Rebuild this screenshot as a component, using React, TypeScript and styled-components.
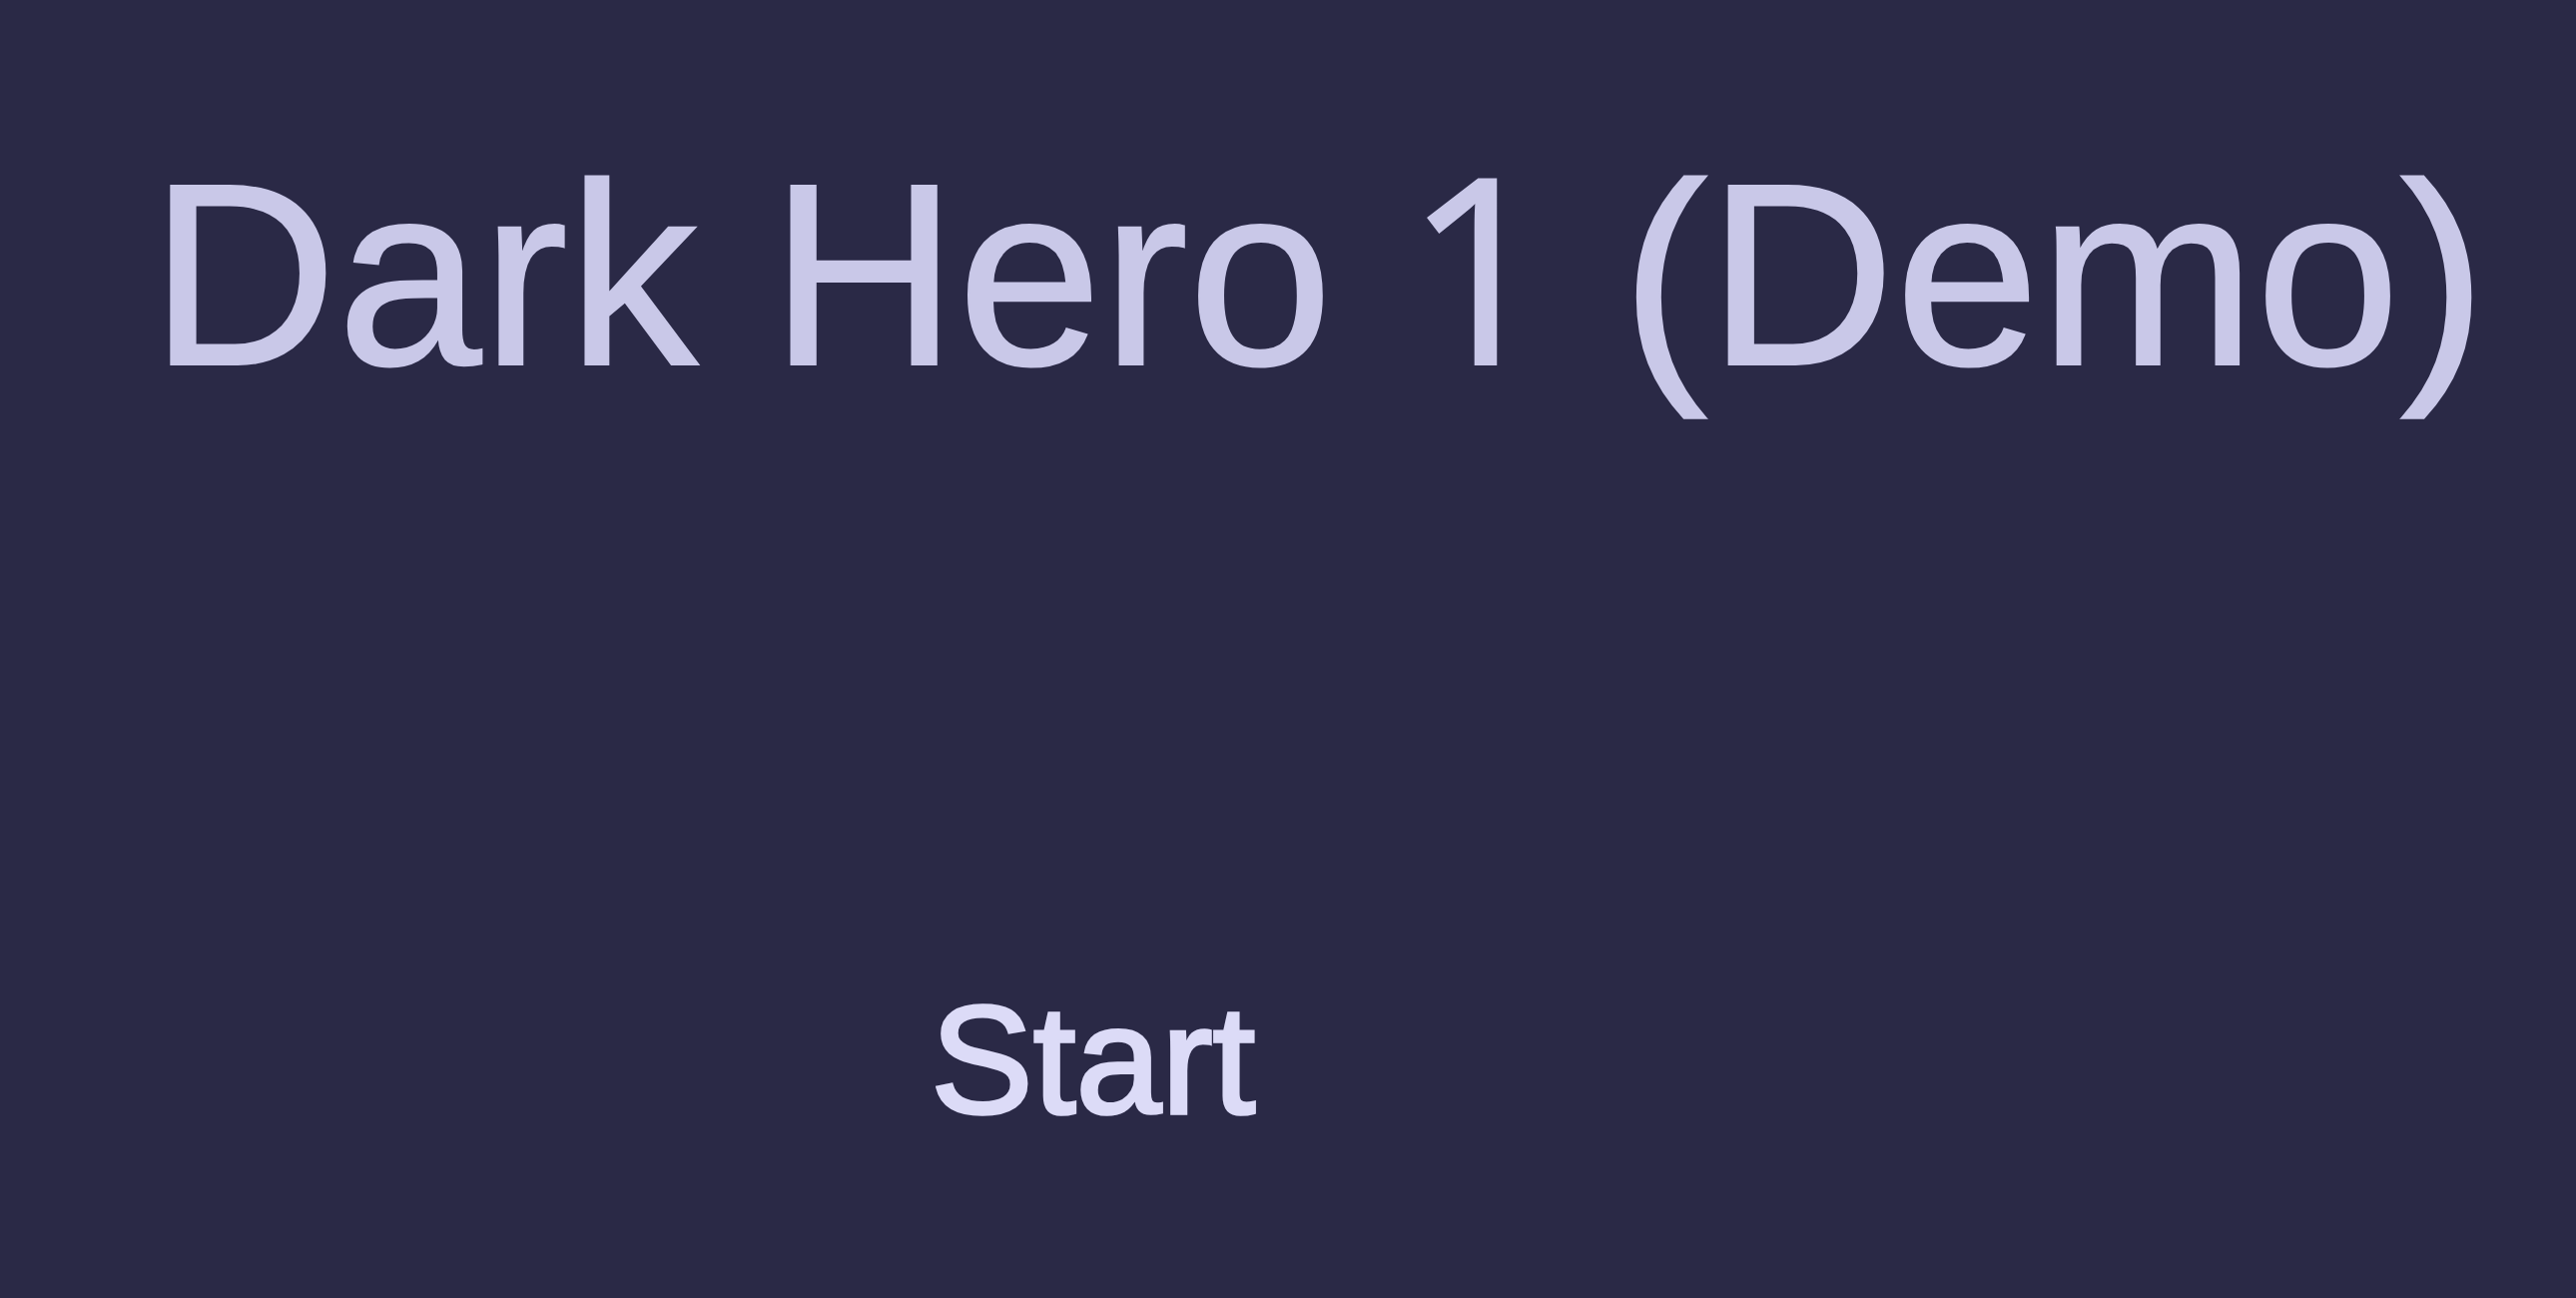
import React from "react";
import styled, { createGlobalStyle } from "styled-components";

const GlobalStyle = createGlobalStyle`
  html, body {
    margin: 0;
    padding: 0;
    background: #2a2946;
  }
  body {
    font-family: "Liberation Sans", Arial, sans-serif;
  }
`;

const Hero = styled.main`
  display: flex;
  flex-direction: column;
  align-items: flex-start;
  width: 100vw;
  height: 100vh;
  box-sizing: border-box;
  padding: 145px 0 0 150px;
  background: #2a2946;
`;

const Title = styled.h1`
  margin: 0;
  font-size: 260px;
  font-weight: 400;
  line-height: 1;
  color: #c9c8e8;
  white-space: nowrap;
  -webkit-text-stroke: 2px #c9c8e8;
`;

// footless "1" like the Helvetica digit in the reference
const Digit = styled.span`
  font-family: "Open Sans", "Liberation Sans", sans-serif;
  line-height: 0;
  letter-spacing: -0.016em;
`;

const StartButton = styled.button`
  margin: 580px 0 0 782px;
  padding: 0;
  border: none;
  background: none;
  font-family: inherit;
  font-size: 154px;
  line-height: 1;
  color: #dcdbf7;
  -webkit-text-stroke: 3.5px #dcdbf7;
  cursor: pointer;
`;

export default function App() {
  return (
    <>
      <GlobalStyle />
      <Hero>
        <Title>
          Dark Hero <Digit>1</Digit> (Demo)
        </Title>
        <StartButton>Start</StartButton>
      </Hero>
    </>
  );
}
